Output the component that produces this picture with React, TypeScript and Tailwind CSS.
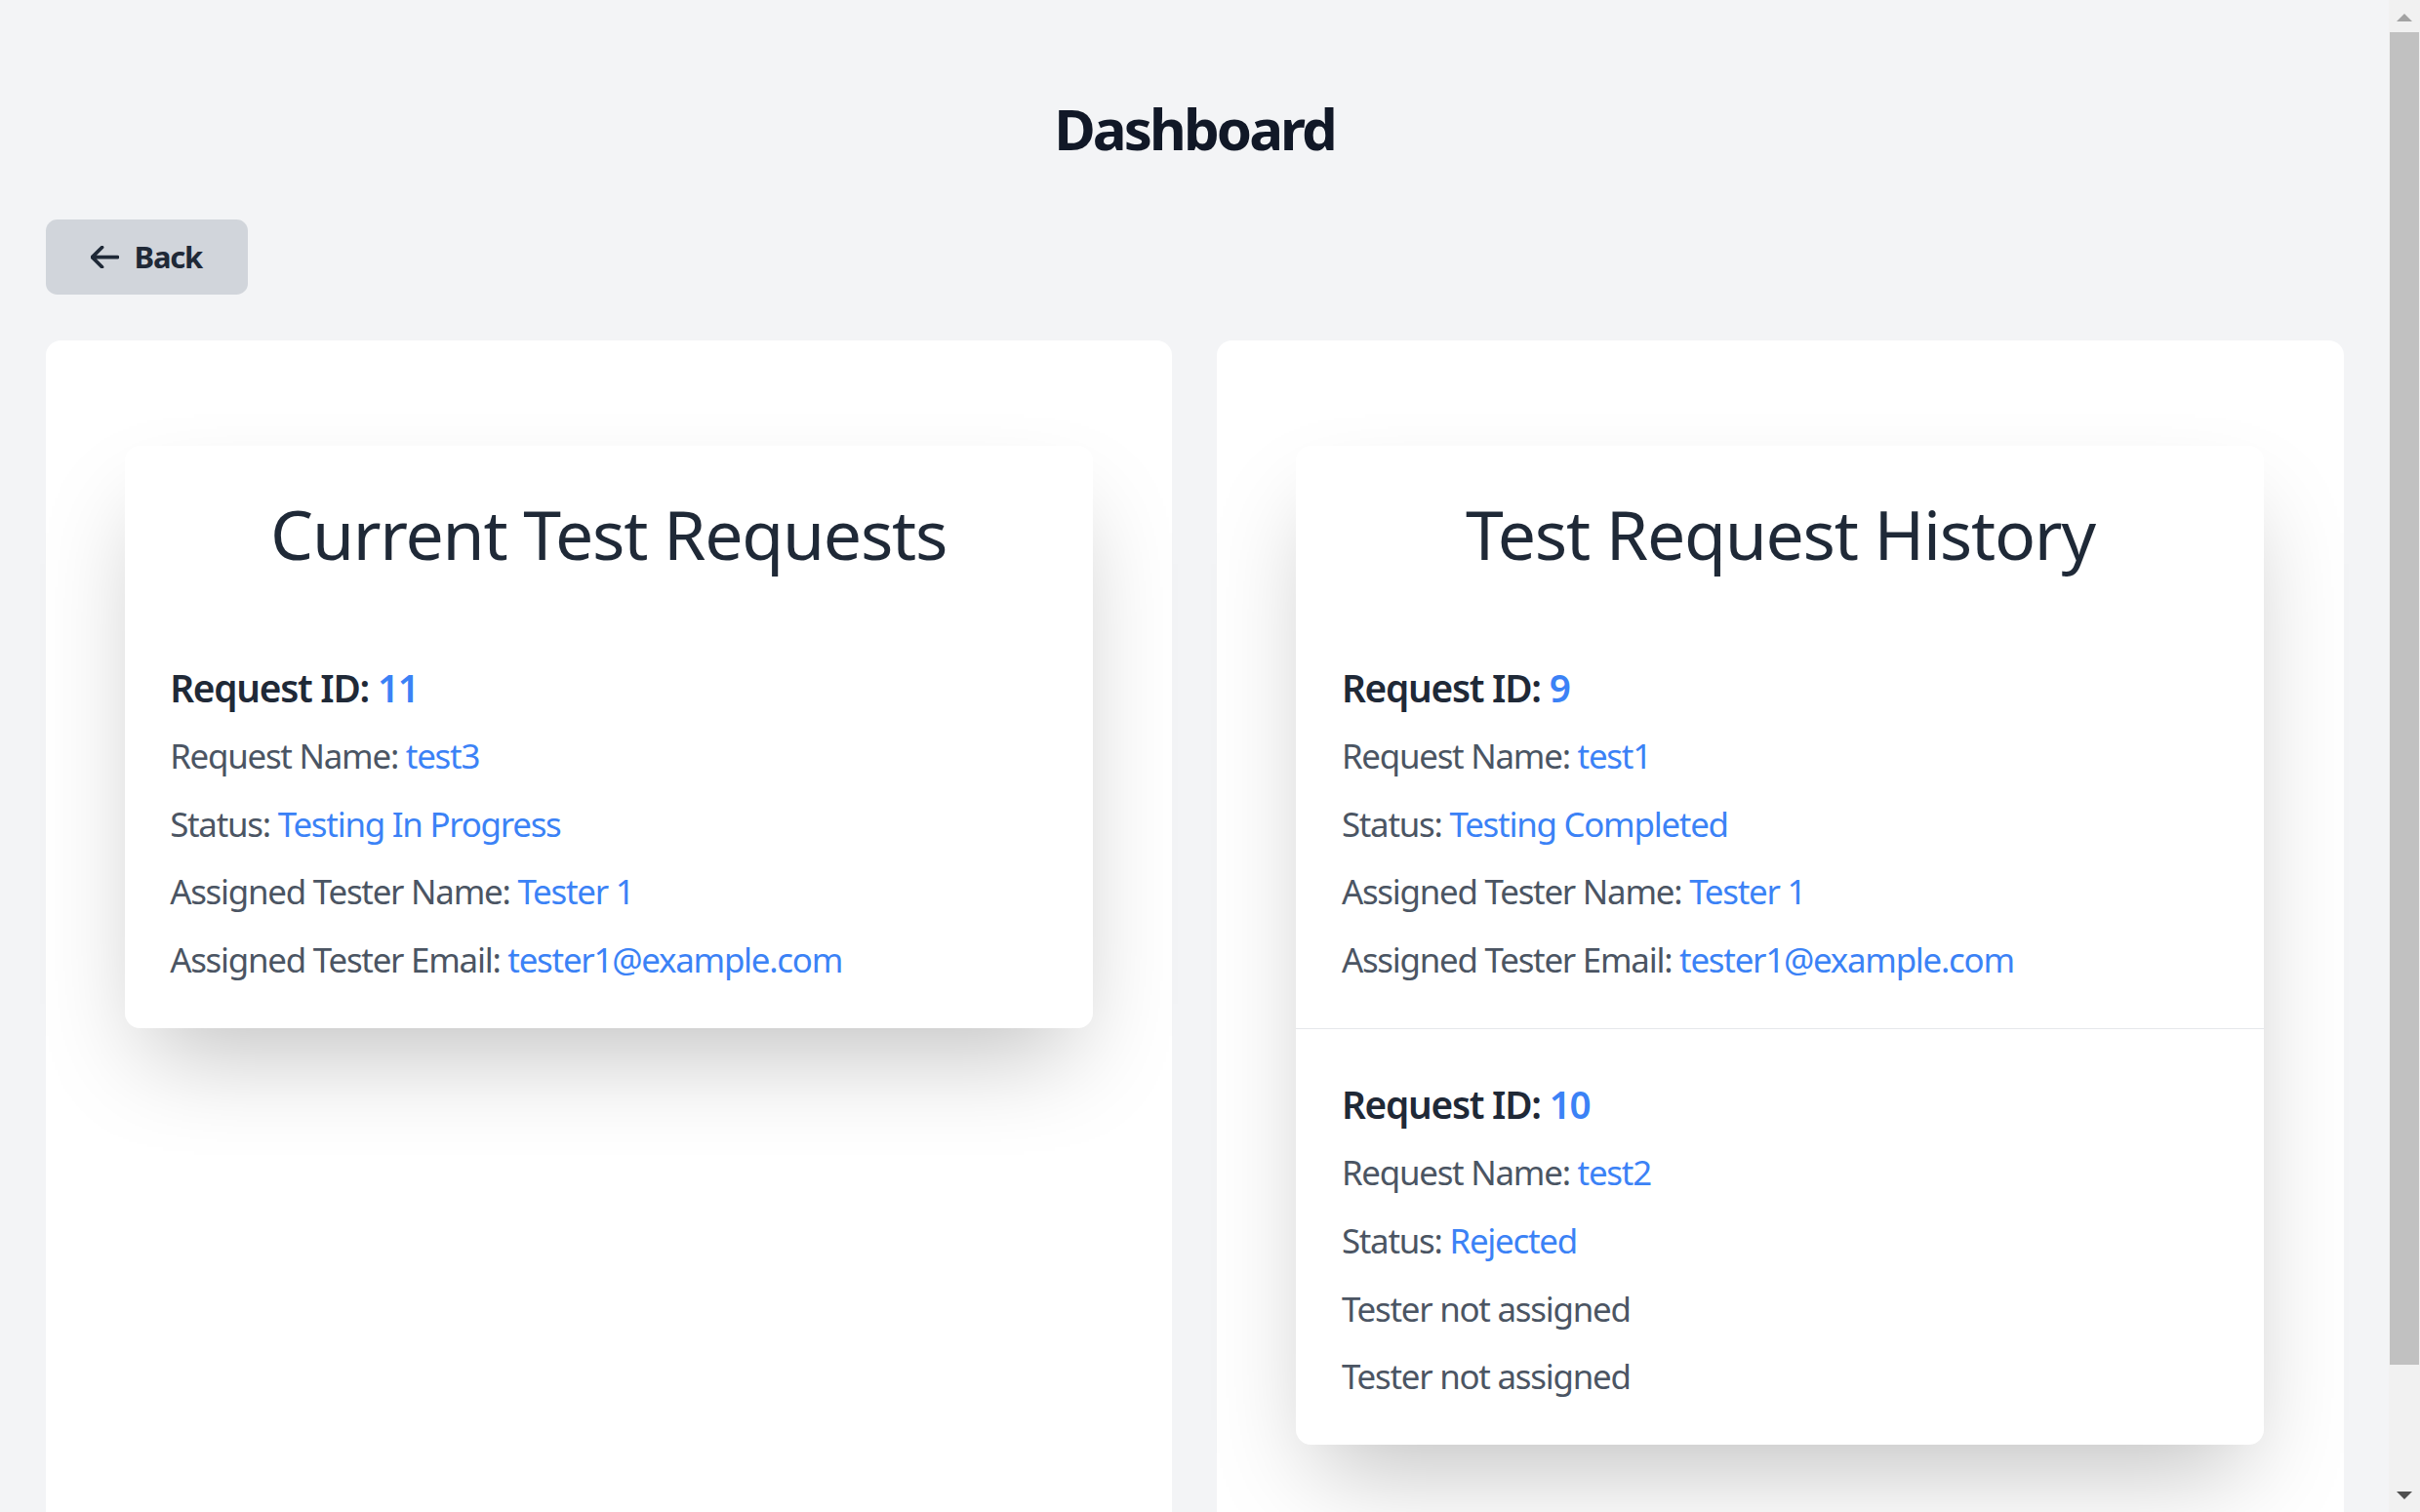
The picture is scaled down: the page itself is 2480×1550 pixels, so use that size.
import React from 'react';

type TestRequest = {
  id: number;
  name: string;
  status: string;
  testerName?: string;
  testerEmail?: string;
};

const currentRequests: TestRequest[] = [
  {
    id: 11,
    name: 'test3',
    status: 'Testing In Progress',
    testerName: 'Tester 1',
    testerEmail: 'tester1@example.com',
  },
];

const requestHistory: TestRequest[] = [
  {
    id: 9,
    name: 'test1',
    status: 'Testing Completed',
    testerName: 'Tester 1',
    testerEmail: 'tester1@example.com',
  },
  { id: 10, name: 'test2', status: 'Rejected' },
];

function RequestItem({ request }: { request: TestRequest }) {
  return (
    <li className="px-6 pt-[26px] pb-[22px] space-y-2">
      <h3 className="text-xl font-semibold text-[#1f2937]">
        Request ID: <span className="text-[#3b82f6]">{request.id}</span>
      </h3>
      <p className="text-lg text-[#4b5563]">
        Request Name: <span className="text-[#3b82f6]">{request.name}</span>
      </p>
      <p className="text-lg text-[#4b5563]">
        Status: <span className="text-[#3b82f6]">{request.status}</span>
      </p>
      {request.testerName ? (
        <p className="text-lg text-[#4b5563]">
          Assigned Tester Name: <span className="text-[#3b82f6]">{request.testerName}</span>
        </p>
      ) : (
        <p className="text-lg text-[#4b5563]">Tester not assigned</p>
      )}
      {request.testerEmail ? (
        <p className="text-lg text-[#4b5563]">
          Assigned Tester Email: <span className="text-[#3b82f6]">{request.testerEmail}</span>
        </p>
      ) : (
        <p className="text-lg text-[#4b5563]">Tester not assigned</p>
      )}
    </li>
  );
}

function RequestPanel({ title, requests }: { title: string; requests: TestRequest[] }) {
  return (
    <div className="bg-white rounded-lg p-6">
      <div className="max-w-lg mx-auto my-8 bg-white rounded-lg shadow-2xl">
        <h2 className="pt-[26px] mb-[22px] text-4xl text-center text-[#1f2937]">{title}</h2>
        <ul className="divide-y divide-[#e5e7eb]">
          {requests.map((request) => (
            <RequestItem key={request.id} request={request} />
          ))}
        </ul>
      </div>
    </div>
  );
}

// browser scrollbar, drawn since the capture has none of its own
function Scrollbar() {
  return (
    <div className="w-[32px] shrink-0 flex flex-col bg-[#f1f1f1]">
      <div className="h-[33px] flex justify-center pt-[14px]">
        <svg className="w-[16px] h-[8px]" viewBox="0 0 16 8" aria-hidden="true">
          <path d="M8 0L16 8H0Z" fill="#a3a3a3" />
        </svg>
      </div>
      <div className="h-[1366px] mx-px bg-[#c1c1c1]" />
      <div className="mt-auto h-[33px] flex justify-center pt-[12px]">
        <svg className="w-[16px] h-[8px]" viewBox="0 0 16 8" aria-hidden="true">
          <path d="M0 0H16L8 8Z" fill="#505050" />
        </svg>
      </div>
    </div>
  );
}

export default function App() {
  return (
    <div className="flex h-screen overflow-hidden">
      <div className="flex-1 min-w-0 overflow-hidden bg-[#f3f4f6]">
        {/* page was captured at 1280px wide, scaled up */}
        <div className="[zoom:1.9375] px-6 pt-6 pb-12 font-['Noto_Sans',sans-serif] tracking-[-0.04em]">
          <h1 className="mt-[26px] mb-[30px] text-3xl font-bold text-center text-[#111827] tracking-[-0.05em]">Dashboard</h1>

          <button className="flex items-center mb-6 px-6 py-2 bg-[#d1d5db] text-[#1f2937] font-bold rounded-md">
            <svg className="w-[15px] h-[12px] mr-2" viewBox="2 4 20 16" fill="none" stroke="currentColor" aria-hidden="true">
              <path strokeLinecap="round" strokeLinejoin="round" strokeWidth={2.5} d="M10 19l-7-7m0 0l7-7m-7 7h18" />
            </svg>
            Back
          </button>

          <div className="grid grid-cols-2 gap-6">
            <RequestPanel title="Current Test Requests" requests={currentRequests} />
            <RequestPanel title="Test Request History" requests={requestHistory} />
          </div>
        </div>
      </div>
      <Scrollbar />
    </div>
  );
}
